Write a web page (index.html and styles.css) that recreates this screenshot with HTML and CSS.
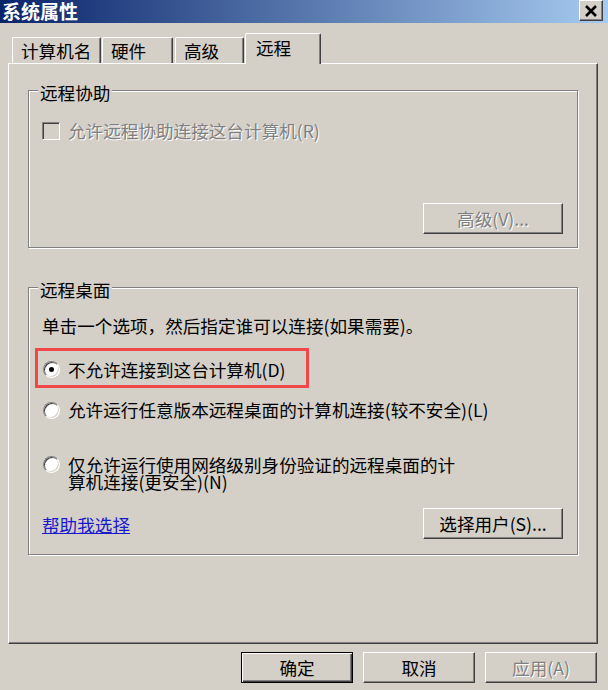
FILE: index.html
```html
<!DOCTYPE html>
<html lang="zh-CN">
<head>
    <meta charset="UTF-8">
    <meta name="viewport" content="width=device-width, initial-scale=1.0">
    <title>系统属性</title>
    <link rel="stylesheet" href="styles.css">
</head>
<body>
    <div class="window">
        <div class="titlebar">
            <span class="title">系统属性</span>
            <span class="close-btn">
                <svg width="14" height="12" viewBox="0 0 14 12">
                    <path d="M2 1 L12 11 M12 1 L2 11" stroke="#000" stroke-width="2.6" fill="none"/>
                </svg>
            </span>
        </div>

        <div class="dialog">
            <div class="tabs">
                <div class="tab tab-name">计算机名</div>
                <div class="tab tab-hw">硬件</div>
                <div class="tab tab-adv">高级</div>
                <div class="tab tab-remote active">远程</div>
            </div>

            <div class="panel">
                <div class="group group-assist">
                    <span class="group-title">远程协助</span>
                    <div class="check-row disabled">
                        <span class="checkbox"></span>
                        <span class="label">允许远程协助连接这台计算机(R)</span>
                    </div>
                    <div class="group-actions">
                        <button class="btn wide" disabled>高级(V)...</button>
                    </div>
                </div>

                <div class="group group-desktop">
                    <span class="group-title">远程桌面</span>
                    <p class="hint">单击一个选项，然后指定谁可以连接(如果需要)。</p>
                    <div class="radio-row highlight">
                        <span class="radio checked"></span>
                        <span class="label">不允许连接到这台计算机(D)</span>
                    </div>
                    <div class="radio-row any-version">
                        <span class="radio"></span>
                        <span class="label">允许运行任意版本远程桌面的计算机连接(较不安全)(L)</span>
                    </div>
                    <div class="radio-row nla">
                        <span class="radio"></span>
                        <span class="label">仅允许运行使用网络级别身份验证的远程桌面的计<br>算机连接(更安全)(N)</span>
                    </div>
                    <div class="group-footer">
                        <a href="#" class="help-link">帮助我选择</a>
                        <button class="btn wide">选择用户(S)...</button>
                    </div>
                </div>
            </div>

            <div class="dialog-buttons">
                <button class="btn default">确定</button>
                <button class="btn">取消</button>
                <button class="btn" disabled>应用(A)</button>
            </div>
        </div>
    </div>
</body>
</html>
```

FILE: styles.css
```css
body {
    margin: 0;
    background-color: #d4d0c8;
    font-family: "Noto Sans CJK SC", sans-serif;
    font-size: 17.6px;
    color: #000;
}
.window {
    width: 608px;
    height: 690px;
    overflow: hidden;
    background-color: #d4d0c8;
}
.titlebar {
    height: 23px;
    display: flex;
    justify-content: space-between;
    align-items: flex-start;
    background: linear-gradient(to right, #0a246a, #a6caf0);
}
.title {
    color: #fff;
    font-weight: bold;
    font-size: 19px;
    line-height: 21px;
    padding-left: 2px;
}
.close-btn {
    width: 24px;
    height: 21px;
    margin-right: 5px;
    box-sizing: border-box;
    display: flex;
    align-items: center;
    justify-content: center;
    background-color: #d4d0c8;
    border: 1px solid;
    border-color: #fff #404040 #404040 #fff;
    box-shadow: inset -1px -1px 0 #808080;
}
.dialog {
    padding: 0 11px 0 8px;
}
.tabs {
    display: flex;
    align-items: flex-end;
    height: 30px;
    margin-top: 10px;
    padding-left: 4px;
}
.tab {
    box-sizing: border-box;
    height: 26px;
    padding: 4px 0 0 8px;
    line-height: 18px;
    white-space: nowrap;
    border-top: 1px solid #fff;
    border-left: 1px solid #fff;
    border-right: 1px solid #404040;
    border-radius: 2px 2px 0 0;
    box-shadow: inset -1px 0 0 #808080;
}
.tab-name {
    width: 89px;
}
.tab-hw {
    width: 71px;
    margin-left: 1px;
}
.tab-adv {
    width: 69px;
    margin-left: 2px;
}
.tab.active {
    position: relative;
    z-index: 1;
    width: 76px;
    height: 31px;
    margin-left: 1px;
    margin-bottom: -1px;
    padding: 5px 0 0 10px;
    background-color: #d4d0c8;
}
.panel {
    box-sizing: border-box;
    width: 590px;
    height: 581px;
    padding: 26px 19px 0 19px;
    border: 1px solid;
    border-color: #fff #404040 #404040 #fff;
    box-shadow: inset -1px -1px 0 #808080;
}
.group {
    position: relative;
    box-sizing: border-box;
    border: 1px solid #808080;
    box-shadow: 1px 1px 0 #fff, inset 1px 1px 0 #fff;
}
.group-title {
    position: absolute;
    top: -7px;
    left: 9px;
    padding: 0 2px;
    line-height: 18px;
    background-color: #d4d0c8;
}
.group-assist {
    height: 158px;
    display: flex;
    flex-direction: column;
    padding: 31px 14px 13px 13px;
}
.group-actions {
    margin-top: auto;
    display: flex;
    justify-content: flex-end;
}
.check-row {
    display: flex;
    align-items: center;
    height: 18px;
    line-height: 18px;
}
.checkbox {
    box-sizing: border-box;
    width: 18px;
    height: 18px;
    margin-right: 8px;
    border: 1px solid;
    border-color: #808080 #fff #fff #808080;
    box-shadow: inset 1px 1px 0 #404040, inset -1px -1px 0 #d4d0c8;
    background-color: #d4d0c8;
}
.disabled .label {
    color: #808080;
    text-shadow: 1px 1px 0 #fff;
}
.group-desktop {
    margin-top: 39px;
    padding: 29px 14px 15px 13px;
}
.hint {
    margin: 0;
    line-height: 18px;
    white-space: nowrap;
}
.radio-row {
    display: flex;
    align-items: center;
    line-height: 18px;
    white-space: nowrap;
    padding-left: 1px;
}
.radio {
    position: relative;
    flex: none;
    box-sizing: border-box;
    width: 17px;
    height: 17px;
    margin-right: 8px;
    border-radius: 50%;
    background-color: #fff;
    border: 1px solid;
    border-color: #808080 #fff #fff #808080;
    box-shadow: inset 1px 1px 0 #404040, inset -1px -1px 0 #d4d0c8;
}
.radio.checked::after {
    content: "";
    position: absolute;
    left: 5px;
    top: 5px;
    width: 5px;
    height: 5px;
    border-radius: 50%;
    background-color: #000;
}
.highlight {
    box-sizing: border-box;
    width: 274px;
    height: 40px;
    margin: 13px 0 0 -7px;
    padding: 3px 0 0 5px;
    border: 3px solid #f04848;
}
.any-version {
    margin-top: 13px;
}
.nla {
    margin-top: 37px;
    align-items: flex-start;
    line-height: 17px;
}
.group-footer {
    display: flex;
    justify-content: space-between;
    align-items: center;
    margin-top: 18px;
}
.help-link {
    color: #1a1acc;
    text-decoration: underline;
    line-height: 18px;
    margin-top: 2px;
}
.btn {
    box-sizing: border-box;
    width: 112px;
    height: 31px;
    padding: 0;
    font: inherit;
    line-height: 18px;
    color: #000;
    background-color: #d4d0c8;
    border: 1px solid;
    border-color: #fff #404040 #404040 #fff;
    box-shadow: inset -1px -1px 0 #808080;
    border-radius: 0;
}
.btn.wide {
    width: 140px;
}
.btn:disabled {
    color: #808080;
    text-shadow: 1px 1px 0 #fff;
}
.btn.default {
    border-color: #000;
    box-shadow: inset 1px 1px 0 #fff, inset -1px -1px 0 #404040, inset -2px -2px 0 #808080;
}
.dialog-buttons {
    display: flex;
    justify-content: flex-end;
    gap: 10px;
    margin-top: 8px;
}
```
